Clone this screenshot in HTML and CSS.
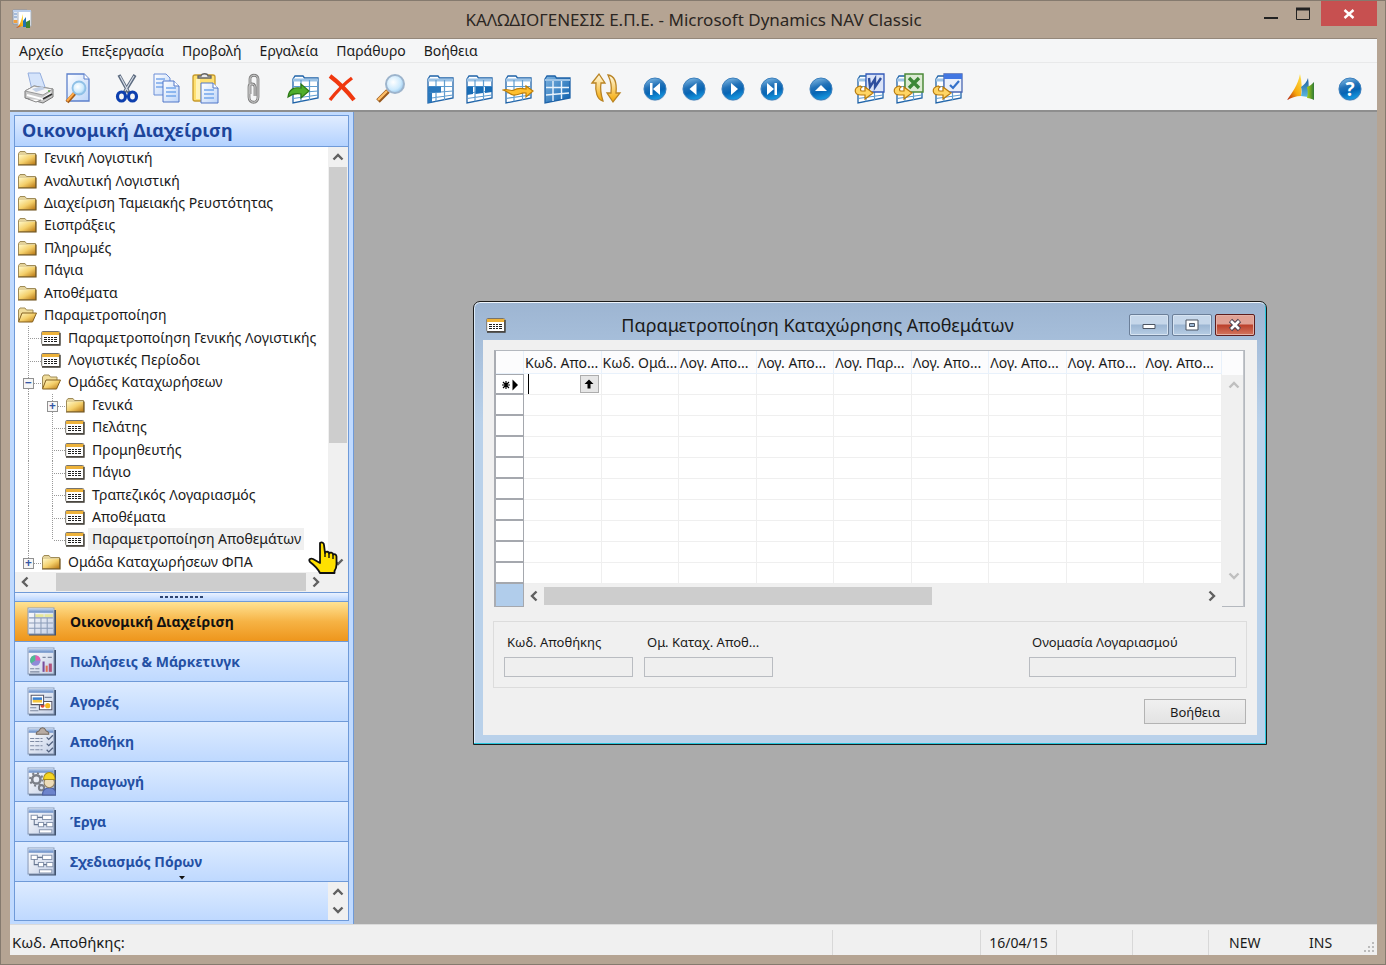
FILE: index.html
```html
<!DOCTYPE html>
<html lang="el">
<head>
  <meta charset="UTF-8">
  <title>ΚΑΛΩΔΙΟΓΕΝΕΣΙΣ Ε.Π.Ε. - Microsoft Dynamics NAV Classic</title>
  <link rel="stylesheet" href="styles.css">
</head>
<body>

  <!-- Shared gradients and symbols -->
  <svg class="defs" width="0" height="0" aria-hidden="true">
    <defs>
      <linearGradient id="gBall" x1="0" y1="0" x2="0.3" y2="1"><stop offset="0" stop-color="#8fc4ea"/><stop offset="0.45" stop-color="#2372b8"/><stop offset="0.7" stop-color="#0765b4"/><stop offset="1" stop-color="#1493dc"/></linearGradient>
      <linearGradient id="gFolder" x1="0" y1="0" x2="1" y2="1"><stop offset="0" stop-color="#fff7c4"/><stop offset="0.5" stop-color="#f4cf6a"/><stop offset="1" stop-color="#b87612"/></linearGradient>
      <linearGradient id="gPage" x1="0" y1="0" x2="1" y2="1"><stop offset="0" stop-color="#ffffff"/><stop offset="1" stop-color="#bcd4f8"/></linearGradient>
      <linearGradient id="gGold" x1="0" y1="0" x2="0" y2="1"><stop offset="0" stop-color="#fffbe6"/><stop offset="1" stop-color="#f5a800"/></linearGradient>
      <linearGradient id="gGrid" x1="0" y1="0" x2="1" y2="1"><stop offset="0" stop-color="#7fb4e0"/><stop offset="1" stop-color="#0a5fae"/></linearGradient>
      <linearGradient id="gBar" x1="0" y1="0" x2="0" y2="1"><stop offset="0" stop-color="#c4d6f0"/><stop offset="1" stop-color="#5f86c2"/></linearGradient>
      <linearGradient id="gSheet" x1="0" y1="0" x2="1" y2="1"><stop offset="0" stop-color="#ffffff"/><stop offset="1" stop-color="#c3cfe6"/></linearGradient>
      <linearGradient id="gFlame" x1="1" y1="0" x2="0" y2="1"><stop offset="0" stop-color="#ffe44d"/><stop offset="0.55" stop-color="#f7a80d"/><stop offset="1" stop-color="#b01c10"/></linearGradient>
      <linearGradient id="gSpire" x1="0" y1="0" x2="0" y2="1"><stop offset="0" stop-color="#1c5c9c"/><stop offset="1" stop-color="#5cb8e0"/></linearGradient>
      <linearGradient id="gLeaf" x1="0" y1="0" x2="1" y2="0"><stop offset="0" stop-color="#a8cc14"/><stop offset="1" stop-color="#2e7a38"/></linearGradient>
      <radialGradient id="gLens" cx="0.4" cy="0.4" r="0.7"><stop offset="0" stop-color="#ffffff"/><stop offset="0.6" stop-color="#cdeafd"/><stop offset="1" stop-color="#86bce8"/></radialGradient>

      <symbol id="folder" viewBox="0 0 20 16">
        <path d="M1.5 14.5V3.5L3 1.5h5l1.500 2h9v11z" fill="#e3d29a" stroke="#a08c58"/>
        <path d="M2 5h16.500v9.500H2z" fill="url(#gFolder)"/>
        <path d="M1 15h18V4.500" fill="none" stroke="#6b4d15" stroke-width="1.200"/>
      </symbol>
      <symbol id="folder-open" viewBox="0 0 20 16">
        <path d="M1.500 14V3L3 1h5l1.500 2H16v3" fill="#f0dc9a" stroke="#a08c58"/>
        <path d="M5 6h14.500l-4 9H1.500z" fill="url(#gFolder)" stroke="#84601f"/>
      </symbol>
      <symbol id="form" viewBox="0 0 20 16">
        <rect x="0.700" y="1.500" width="18" height="13" rx="1" fill="#fff" stroke="#77736c"/>
        <path d="M1 2h17.500v3H1z" fill="#edb23a"/>
        <path d="M3 7.500h3M7 7.500h2M10 7.500h2M13 7.500h3M3 9.500h3M7 9.500h2M10 9.500h2M13 9.500h3M3 11.500h3M7 11.500h2M10 11.500h2M13 11.500h3" stroke="#1e1e1e" stroke-width="1.100"/>
        <path d="M1 15h18V3" fill="none" stroke="#3d3932" stroke-width="1.300"/>
      </symbol>
      <symbol id="grid" viewBox="0 0 32 32">
        <path d="M4 7l2-3h8l1.500 2H29v20L4 31z" fill="#fff" stroke="#1f63a8" stroke-width="1.300"/>
        <path d="M4 8h25" stroke="#9cc3e6" stroke-width="3"/>
        <path d="M4 14.500h25M4 21l25-2M12 8v21.500M20.500 8v20M4 26.500l25-3.500" fill="none" stroke="#5f9dd0" stroke-width="1.200"/>
      </symbol>
      <symbol id="ball" viewBox="0 0 32 32">
        <circle cx="16" cy="17.500" r="11.500" fill="#cfdbe8"/>
        <circle cx="16" cy="17" r="11" fill="url(#gBall)" stroke="#3c80bd"/>
      </symbol>
      <symbol id="goldarrow" viewBox="0 0 32 32">
        <path d="M6 14c-7 2-6 9 1 9h4v4l8-6-8-6v4H8c-2 0-2-3 0-4z" fill="#ffd563" stroke="#b87a0b" stroke-width="1.200"/>
      </symbol>
      <symbol id="sheet" viewBox="0 0 28 28">
        <path d="M2 26.500h25V3" fill="none" stroke="#42536f" stroke-width="2"/>
        <path d="M1 1h25v25H1z" fill="url(#gSheet)" stroke="#8a9bb8"/>
        <path d="M1.500 1.500h24v4h-24z" fill="url(#gBar)"/>
      </symbol>
      <symbol id="flow" viewBox="0 0 28 28">
        <path d="M4 8h6v4H4zM15 8h9v4h-9zM11 15h5v4h-5zM19 15h6v4h-6zM12 22h12v3H12z" fill="#fff" stroke="#8795ae"/>
        <path d="M10 10h5M7 12v5h4M16 17h3" fill="none" stroke="#66758f"/>
      </symbol>
      <symbol id="up" viewBox="0 0 12 12"><path d="M1.500 8.500L6 4l4.500 4.500" fill="none" stroke="currentColor" stroke-width="2.400"/></symbol>
      <symbol id="down" viewBox="0 0 12 12"><path d="M1.500 3.500L6 8l4.500-4.500" fill="none" stroke="currentColor" stroke-width="2.400"/></symbol>
      <symbol id="left" viewBox="0 0 12 12"><path d="M8.500 1.500L4 6l4.500 4.500" fill="none" stroke="currentColor" stroke-width="2.400"/></symbol>
      <symbol id="right" viewBox="0 0 12 12"><path d="M3.500 1.500L8 6l-4.500 4.500" fill="none" stroke="currentColor" stroke-width="2.400"/></symbol>
    </defs>
  </svg>

  <div class="app">
    <header class="titlebar">
      <svg class="app-icon" viewBox="0 0 20 20">
        <path d="M1 1h14v14H1z" fill="#dfe7f2" stroke="#8b97a8"/><path d="M6 2h13v15H6z" fill="#fff" stroke="#a8b2c0"/><path d="M1 1h18v2H1z" fill="#b9cdea"/><path d="M2 5h3M2 8h3" stroke="#6a8fc4"/><path d="M1.500 11h4v3h-4z" fill="#f0a040"/>
        <path d="M4 19c4-2 5-7 7-14v12z" fill="url(#gFlame)"/><path d="M11 18V12l3-4v10z" fill="#2072b5"/><path d="M14 19v-6l4-2v8z" fill="#40852f"/>
      </svg>
      <h1 class="title">ΚΑΛΩΔΙΟΓΕΝΕΣΙΣ Ε.Π.Ε. - Microsoft Dynamics NAV Classic</h1>
      <div class="win-controls">
        <button class="win-btn" aria-label="Ελαχιστοποίηση"><svg width="16" height="16"><path d="M1 12h14" stroke="#222" stroke-width="2"/></svg></button>
        <button class="win-btn" aria-label="Μεγιστοποίηση"><svg width="16" height="16"><path d="M1.500 3h13v10.500h-13z" fill="none" stroke="#222"/><path d="M1 3h14" stroke="#222" stroke-width="3"/></svg></button>
        <button class="win-btn win-close" aria-label="Κλείσιμο"><svg width="12" height="12"><path d="M1.500 2l9 8M10.500 2l-9 8" stroke="#fff" stroke-width="2.400"/></svg></button>
      </div>
    </header>

    <div class="client">
      <nav class="menubar">
        <button>Αρχείο</button>
        <button>Επεξεργασία</button>
        <button>Προβολή</button>
        <button>Εργαλεία</button>
        <button>Παράθυρο</button>
        <button>Βοήθεια</button>
      </nav>

      <div class="toolbar">
        <div class="tool-group">
          <button class="tool" aria-label="Εκτύπωση"><svg viewBox="0 0 32 32">
            <path d="M5 1h12l5 14-13 3z" fill="#d5e4fb" stroke="#94aede"/>
            <path d="M2 19l9-5 19 3v8l-10 6L2 26z" fill="#c9c9c9" stroke="#777"/>
            <path d="M2 19l9-5 19 3-10 6z" fill="#f6f6f6" stroke="#999"/>
            <path d="M9 17l10-3 3 3-9 3z" fill="#c2d0e6"/>
            <path d="M4 23l15 4 9-6" fill="none" stroke="#fff" stroke-width="2"/>
            <path d="M20 27l9-5" stroke="#333" stroke-width="2"/><path d="M5 27l8 3 5-2" fill="#fff" stroke="#888"/><circle cx="26" cy="19" r="1" fill="#58a548"/>
          </svg></button>
          <button class="tool" aria-label="Προεπισκόπηση"><svg viewBox="0 0 32 32">
            <path d="M5 2h17l5 5v22H5z" fill="url(#gPage)" stroke="#5c80cb" stroke-width="1.300"/><path d="M22 2v5h5" fill="#fff" stroke="#5c80cb"/>
            <path d="M13 21l-8 9" stroke="#a55c17" stroke-width="4"/><path d="M12 21l-7 8" stroke="#ffab4a" stroke-width="2"/>
            <circle cx="17" cy="16" r="6.500" fill="url(#gLens)" stroke="#8fc0e6" stroke-width="1.800"/>
          </svg></button>
        </div>
        <div class="tool-group">
          <button class="tool" aria-label="Αποκοπή"><svg viewBox="0 0 32 32">
            <path d="M8 3l10 18M24 3L13 21" stroke="#5c6b80" stroke-width="3.400"/><path d="M9 4l8 15M23 4l-9 15" stroke="#d6dce6" stroke-width="1.200"/>
            <ellipse cx="10.500" cy="24.500" rx="4" ry="4.500" fill="none" stroke="#0d3fae" stroke-width="3.200"/><ellipse cx="21.500" cy="24.500" rx="4" ry="4.500" fill="none" stroke="#0d3fae" stroke-width="3.200"/>
          </svg></button>
          <button class="tool" aria-label="Αντιγραφή"><svg viewBox="0 0 32 32">
            <path d="M4 2h12l4 4v17H4z" fill="url(#gPage)" stroke="#6b8ed6"/><path d="M6 7h9M6 11h8M6 15h8" stroke="#7aa8ea" stroke-width="1.500"/>
            <path d="M13 9h11l5 5v16H13z" fill="url(#gPage)" stroke="#5177c8"/><path d="M24 9v5h5" fill="#fff" stroke="#5177c8"/><path d="M16 16h10M16 20h10M16 24h10" stroke="#73a6ec" stroke-width="1.600"/>
          </svg></button>
          <button class="tool" aria-label="Επικόλληση"><svg viewBox="0 0 32 32">
            <rect x="4" y="3" width="22" height="26" rx="2" fill="#ffe070" stroke="#c79a2c" stroke-width="1.300"/><path d="M7 7h4v20H7z" fill="#fff3b8"/>
            <path d="M9 6V4h3c0-3 7-3 7 0h3v2z" fill="#e9e9e9" stroke="#666" stroke-width="1.300"/>
            <path d="M12 11h12l5 5v15H12z" fill="url(#gPage)" stroke="#5177c8"/><path d="M24 11v5h5" fill="#fff" stroke="#5177c8"/><path d="M15 18h10M15 22h10M15 26h10" stroke="#73a6ec" stroke-width="1.600"/>
          </svg></button>
        </div>
        <div class="tool-group">
          <button class="tool" aria-label="Συνημμένα"><svg viewBox="0 0 32 32">
            <path d="M12 22V7c0-5 8-5 8 0v18c0 7-9 7-9 0V15c0-4 6-4 6 0v9" fill="none" stroke="#808080" stroke-width="2.800"/><path d="M12 22V7c0-5 8-5 8 0v18c0 7-9 7-9 0V15c0-4 6-4 6 0v9" fill="none" stroke="#d0d0d0" stroke-width="1"/>
          </svg></button>
        </div>
        <div class="tool-group">
          <button class="tool" aria-label="Εισαγωγή"><svg viewBox="0 0 32 32"><use href="#grid" x="2"/><path d="M1 25c1-8 6-10 13-9v-4l8 7-8 7v-4c-5-1-9 0-13 3z" fill="#4fae2b" stroke="#2b7715" stroke-width="1.200"/></svg></button>
          <button class="tool" aria-label="Διαγραφή"><svg viewBox="0 0 32 32"><path d="M4 4c8 6 17 15 24 24" fill="none" stroke="#f0380f" stroke-width="4.200"/><path d="M26 6C18 12 11 19 4 28" fill="none" stroke="#f0380f" stroke-width="3.400"/></svg></button>
        </div>
        <div class="tool-group">
          <button class="tool" aria-label="Εύρεση"><svg viewBox="0 0 32 32">
            <path d="M13 19L3 29" stroke="#98581d" stroke-width="5"/><path d="M12 19L3 28" stroke="#ffbe66" stroke-width="2.400"/>
            <circle cx="20" cy="12" r="9" fill="url(#gLens)" stroke="#9db4cc" stroke-width="2"/>
          </svg></button>
        </div>
        <div class="tool-group">
          <button class="tool" aria-label="Φίλτρο πεδίου"><svg viewBox="0 0 32 32"><use href="#grid"/><path d="M4 14.500h8v6L4 21zM4 21h4v9l-4 1zM12 14.500h5v6h-5z" fill="#2a78bd"/></svg></button>
          <button class="tool" aria-label="Φίλτρο πίνακα"><svg viewBox="0 0 32 32"><use href="#grid"/><path d="M4 14.500h6v7.500L4 23zM12.500 14.500h7.500v6.500l-7.500 1zM22 14.500h7V20l-7 1z" fill="#186cb5"/></svg></button>
          <button class="tool" aria-label="Φίλτρο ροής"><svg viewBox="0 0 32 32"><use href="#grid"/><path d="M1 18c5-2 7 2 11 0 3-2 7-2 12-1v-3l7 5-7 6v-4c-5-1-8 3-13 2-3-1-6-4-10-5z" fill="#ffbf2e" stroke="#bd7d06" stroke-width="1.200"/></svg></button>
          <button class="tool" aria-label="Εμφάνιση όλων"><svg viewBox="0 0 32 32"><path d="M4 7l2-3h8l1.500 2H29v20L4 31z" fill="url(#gGrid)" stroke="#1f63a8" stroke-width="1.300"/><path d="M4 8h25" stroke="#9cc3e6" stroke-width="2"/><path d="M5 15.500h23M5 23l23-2M12 9v20M20.500 9v18" fill="none" stroke="#e9f3fc" stroke-width="1.400"/></svg></button>
        </div>
        <div class="tool-group">
          <button class="tool" aria-label="Ταξινόμηση"><svg viewBox="0 0 32 32"><path d="M2 11l7-9 6 9h-4c-1 6 0 12 2 18-6-1-8-10-7-18z" fill="url(#gGold)" stroke="#b98425" stroke-width="1.300"/><path d="M18 3c7 1 9 8 8 18h4l-7 9-6-9h4c1-7 0-12-3-18z" fill="url(#gGold)" stroke="#b98425" stroke-width="1.300"/></svg></button>
        </div>
        <div class="tool-group">
          <button class="tool" aria-label="Πρώτο"><svg viewBox="0 0 32 32"><use href="#ball"/><path d="M11 11h2.500v12H11zM21 11v12l-7-6z" fill="#fff"/></svg></button>
          <button class="tool" aria-label="Προηγούμενο"><svg viewBox="0 0 32 32"><use href="#ball"/><path d="M18.500 11v12l-7-6z" fill="#fff"/></svg></button>
          <button class="tool" aria-label="Επόμενο"><svg viewBox="0 0 32 32"><use href="#ball"/><path d="M14 11v12l7-6z" fill="#fff"/></svg></button>
          <button class="tool" aria-label="Τελευταίο"><svg viewBox="0 0 32 32"><use href="#ball"/><path d="M11 11v12l7-6zM18.500 11H21v12h-2.500z" fill="#fff"/></svg></button>
        </div>
        <div class="tool-group">
          <button class="tool" aria-label="Λίστα"><svg viewBox="0 0 32 32"><use href="#ball"/><path d="M10 19h12l-6-6z" fill="#fff"/></svg></button>
        </div>
        <div class="tool-group">
          <button class="tool" aria-label="Word"><svg viewBox="0 0 32 32"><use href="#grid"/><path d="M12 2h18v18H12z" fill="#dbe4f8" stroke="#3359b8" stroke-width="1.300"/><path d="M15 6l1 9 5-8v8l6-9" fill="none" stroke="#2e4f9e" stroke-width="2.400"/><use href="#goldarrow"/></svg></button>
          <button class="tool" aria-label="Excel"><svg viewBox="0 0 32 32"><use href="#grid"/><path d="M12 2h18v18H12z" fill="#dcebd3" stroke="#4c8a3a" stroke-width="1.500"/><path d="M16 6l10 10M26 6L16 16" fill="none" stroke="#3c8736" stroke-width="3.400"/><use href="#goldarrow"/></svg></button>
          <button class="tool" aria-label="SharePoint"><svg viewBox="0 0 32 32"><use href="#grid"/><path d="M12 2h18v18H12z" fill="#eaf0fb" stroke="#4a67b2" stroke-width="1.300"/><path d="M12 2h18v5H12z" fill="#4277e2"/><path d="M18 13l3 3 6-7" fill="none" stroke="#3371cb" stroke-width="2.200"/><use href="#goldarrow"/></svg></button>
        </div>
        <div class="tool-group tool-right">
          <button class="tool" aria-label="Dynamics"><svg viewBox="0 0 32 32"><path d="M2 28C7 21 13 13 15 2c2 8 2 15 1 22-5 0-10 2-14 4z" fill="url(#gFlame)"/><path d="M16 24c1-4 1-6 0-9 3-2 6-5 7-9 1 6 1 13 0 19z" fill="url(#gSpire)"/><path d="M22 26c1-4 1-7 0-11 3-1 5-3 7-5v18c-2-1-4-2-7-2z" fill="url(#gLeaf)"/></svg></button>
          <button class="tool" aria-label="Βοήθεια"><svg viewBox="0 0 32 32"><use href="#ball"/><text class="qmark" x="16" y="24">?</text></svg></button>
        </div>
      </div>

      <div class="workspace">
        <aside class="sidebar">
          <div class="pane">
            <h2 class="pane-title">Οικονομική Διαχείριση</h2>
            <div class="tree-area">
              <ul class="tree">
                <li><svg class="ico"><use href="#folder"/></svg><span>Γενική Λογιστική</span></li>
                <li><svg class="ico"><use href="#folder"/></svg><span>Αναλυτική Λογιστική</span></li>
                <li><svg class="ico"><use href="#folder"/></svg><span>Διαχείριση Ταμειακής Ρευστότητας</span></li>
                <li><svg class="ico"><use href="#folder"/></svg><span>Εισπράξεις</span></li>
                <li><svg class="ico"><use href="#folder"/></svg><span>Πληρωμές</span></li>
                <li><svg class="ico"><use href="#folder"/></svg><span>Πάγια</span></li>
                <li><svg class="ico"><use href="#folder"/></svg><span>Αποθέματα</span></li>
                <li><svg class="ico"><use href="#folder-open"/></svg><span>Παραμετροποίηση</span></li>
                <li><i class="guide tee"></i><svg class="ico"><use href="#form"/></svg><span>Παραμετροποίηση Γενικής Λογιστικής</span></li>
                <li><i class="guide tee"></i><svg class="ico"><use href="#form"/></svg><span>Λογιστικές Περίοδοι</span></li>
                <li><i class="guide tee"><b class="box">−</b></i><svg class="ico"><use href="#folder-open"/></svg><span>Ομάδες Καταχωρήσεων</span></li>
                <li><i class="guide"></i><i class="guide tee"><b class="box">+</b></i><svg class="ico"><use href="#folder"/></svg><span>Γενικά</span></li>
                <li><i class="guide"></i><i class="guide tee"></i><svg class="ico"><use href="#form"/></svg><span>Πελάτης</span></li>
                <li><i class="guide"></i><i class="guide tee"></i><svg class="ico"><use href="#form"/></svg><span>Προμηθευτής</span></li>
                <li><i class="guide"></i><i class="guide tee"></i><svg class="ico"><use href="#form"/></svg><span>Πάγιο</span></li>
                <li><i class="guide"></i><i class="guide tee"></i><svg class="ico"><use href="#form"/></svg><span>Τραπεζικός Λογαριασμός</span></li>
                <li><i class="guide"></i><i class="guide tee"></i><svg class="ico"><use href="#form"/></svg><span>Αποθέματα</span></li>
                <li><i class="guide"></i><i class="guide tee last"></i><svg class="ico"><use href="#form"/></svg><span class="selected">Παραμετροποίηση Αποθεμάτων</span></li>
                <li><i class="guide tee last"><b class="box">+</b></i><svg class="ico"><use href="#folder"/></svg><span>Ομάδα Καταχωρήσεων ΦΠΑ</span></li>
              </ul>
              <div class="vscroll">
                <svg class="chev"><use href="#up"/></svg>
                <div class="thumb tree-thumb"></div>
                <svg class="chev chev-end"><use href="#down"/></svg>
              </div>
              <svg class="hand" viewBox="0 0 30 34">
                <path d="M12 2c2-1.500 4 0 4 2l1 8c1-2 4-1.500 4 .5 1-1.500 4-1 4 1 1-1 3.500 0 3.500 2v8c0 3-1 5-2 6.500V32H12c-2-4-6-8-10-11-2-3 1-4 3-3l7 4z" fill="#ffe000" stroke="#111" stroke-width="1.800" stroke-linejoin="round"/>
                <path d="M17 12v4M21 13v4M25 14v4" stroke="#111" stroke-width="1.400"/>
              </svg>
            </div>
            <div class="hscroll">
              <svg class="chev"><use href="#left"/></svg>
              <div class="thumb side-thumb"></div>
              <svg class="chev"><use href="#right"/></svg>
            </div>
            <div class="splitter"></div>

            <div class="nav-buttons">
              <button class="nav active"><svg viewBox="0 0 28 28"><use href="#sheet"/><path d="M8 7h8v3H8zM17 7h8v3h-8z" fill="#e6e79a"/><path d="M2 10.500h23M2 15.500h23M2 20.500h23M7.500 6v20M13.500 10v16M19.500 10v16" stroke="#8b9cb8"/></svg>Οικονομική Διαχείριση</button>
              <button class="nav"><svg viewBox="0 0 28 28"><use href="#sheet"/><circle cx="8" cy="13" r="5" fill="#8f8bd8"/><path d="M8 13V8a5 5 0 0 1 5 5z" fill="#e45fb0"/><path d="M8 13l-4 3a5 5 0 0 1 4-8z" fill="#4fbb91"/><path d="M15 10h3M20 10h4M3 21h4M8 21h4M3 24h9" stroke="#7c88a0"/><path d="M15 14h2v10h-2z" fill="#7a4d9c"/><path d="M18 18h2v6h-2z" fill="#e07050"/><path d="M21 16h3v8h-3z" fill="#b0527e"/></svg>Πωλήσεις &amp; Μάρκετινγκ</button>
              <button class="nav"><svg viewBox="0 0 28 28"><use href="#sheet"/><path d="M17 10h7M3 20h6M3 23h8" stroke="#7c88a0"/><path d="M12 14h12v8H12z" fill="#fff" stroke="#556"/><circle cx="15" cy="18" r="2" fill="#e2452f"/><circle cx="20" cy="18" r="2.500" fill="#f3b71f"/><path d="M4 8h12v9H4z" fill="#fff" stroke="#556"/><path d="M5.500 10h9v2.500h-9z" fill="#3a7fd0"/><path d="M5.500 12.500h9V15h-9z" fill="#f4c53a"/></svg>Αγορές</button>
              <button class="nav"><svg viewBox="0 0 28 28"><use href="#sheet"/><path d="M9 6c1-3 3-1 3-3 1-3 5-3 6 0 0 2 2 0 3 3v1H9z" fill="#b8aca4" stroke="#74695f"/><path d="M3 11h12M3 14h12M3 18h12M3 22h12" stroke="#7f8ba3" stroke-dasharray="4 1"/><path d="M19 10l2 2 4-4M19 16l2 2 4-4M19 22l2 2 4-4" fill="none" stroke="#51617e" stroke-width="1.200"/></svg>Αποθήκη</button>
              <button class="nav"><svg viewBox="0 0 28 28"><use href="#sheet"/><circle cx="9" cy="12" r="4" fill="none" stroke="#7b7f88" stroke-width="2.500"/><circle cx="9" cy="12" r="6" fill="none" stroke="#7b7f88" stroke-width="2" stroke-dasharray="2 2.700"/><circle cx="14" cy="20" r="2.500" fill="none" stroke="#7b7f88" stroke-width="2"/><path d="M15 27c0-5 3-7 7-7s6 2 6 7z" fill="#6d84cc" stroke="#4a5e9e"/><circle cx="21.500" cy="15" r="5" fill="#eddcb8" stroke="#8d7d60"/><path d="M16 12c0-9 11-9 11 0z" fill="#f5d522" stroke="#a98c14"/></svg>Παραγωγή</button>
              <button class="nav"><svg viewBox="0 0 28 28"><use href="#sheet"/><use href="#flow"/></svg>Έργα</button>
              <button class="nav"><svg viewBox="0 0 28 28"><use href="#sheet"/><use href="#flow"/></svg>Σχεδιασμός Πόρων</button>
            </div>
            <div class="nav-overflow">
              <svg class="more" viewBox="0 0 6 4"><path d="M0 0h6L3 3.500z" fill="#111"/></svg>
              <div class="vscroll">
                <svg class="chev"><use href="#up"/></svg>
                <svg class="chev chev-end"><use href="#down"/></svg>
              </div>
            </div>
          </div>
        </aside>

        <main class="desktop">
          <section class="child">
            <header class="child-title">
              <svg class="ico"><use href="#form"/></svg>
              <h2>Παραμετροποίηση Καταχώρησης Αποθεμάτων</h2>
              <div class="child-controls">
                <button aria-label="Ελαχιστοποίηση"><svg width="16" height="14"><path d="M2 6.500h12v4H2z" fill="#fff" stroke="#4c5563"/></svg></button>
                <button aria-label="Επαναφορά"><svg width="16" height="14"><path d="M2 2h12v10H2z" fill="#fff" stroke="#4c5563"/><path d="M5.500 5.500h5v3h-5z" fill="#9db8d5" stroke="#4c5563"/></svg></button>
                <button class="child-close" aria-label="Κλείσιμο"><svg width="16" height="14"><path d="M3.500 2.500l9 9M12.500 2.500l-9 9" stroke="#4b4050" stroke-width="4.600"/><path d="M4 3l8 8M12 3l-8 8" stroke="#fff" stroke-width="2.600"/></svg></button>
              </div>
            </header>

            <div class="child-body">
              <div class="grid-box">
                <div class="grid-main">
                  <table class="records">
                    <thead>
                      <tr><th class="sel"></th><th>Κωδ. Απο...</th><th>Κωδ. Ομά...</th><th>Λογ. Απο...</th><th>Λογ. Απο...</th><th>Λογ. Παρ...</th><th>Λογ. Απο...</th><th>Λογ. Απο...</th><th>Λογ. Απο...</th><th>Λογ. Απο...</th></tr>
                    </thead>
                    <tbody>
                      <tr>
                        <td class="sel"><svg class="marker" viewBox="0 0 18 12"><path d="M5 2v8M1 6h8M2 3l6 6M8 3L2 9" stroke="#000" stroke-width="1.200"/><path d="M11.500 0.500v11l5.500-5.500z"/></svg></td>
                        <td><div class="edit-cell"><input type="text" aria-label="Κωδ. Αποθήκης"><button class="lookup" aria-label="Αναζήτηση"><svg viewBox="0 0 10 10"><path d="M5 0.500l4.500 4.500h-3v4.500h-3V5h-3z"/></svg></button></div></td>
                        <td></td><td></td><td></td><td></td><td></td><td></td><td></td><td></td>
                      </tr>
                      <tr><td class="sel"></td><td></td><td></td><td></td><td></td><td></td><td></td><td></td><td></td><td></td></tr>
                      <tr><td class="sel"></td><td></td><td></td><td></td><td></td><td></td><td></td><td></td><td></td><td></td></tr>
                      <tr><td class="sel"></td><td></td><td></td><td></td><td></td><td></td><td></td><td></td><td></td><td></td></tr>
                      <tr><td class="sel"></td><td></td><td></td><td></td><td></td><td></td><td></td><td></td><td></td><td></td></tr>
                      <tr><td class="sel"></td><td></td><td></td><td></td><td></td><td></td><td></td><td></td><td></td><td></td></tr>
                      <tr><td class="sel"></td><td></td><td></td><td></td><td></td><td></td><td></td><td></td><td></td><td></td></tr>
                      <tr><td class="sel"></td><td></td><td></td><td></td><td></td><td></td><td></td><td></td><td></td><td></td></tr>
                      <tr><td class="sel"></td><td></td><td></td><td></td><td></td><td></td><td></td><td></td><td></td><td></td></tr>
                      <tr><td class="sel"></td><td></td><td></td><td></td><td></td><td></td><td></td><td></td><td></td><td></td></tr>
                    </tbody>
                  </table>
                  <div class="grid-foot">
                    <div class="corner"></div>
                    <div class="hscroll">
                      <svg class="chev"><use href="#left"/></svg>
                      <div class="track"><div class="thumb grid-thumb"></div></div>
                      <svg class="chev"><use href="#right"/></svg>
                    </div>
                  </div>
                </div>
                <div class="grid-side">
                  <svg class="chev"><use href="#up"/></svg>
                  <svg class="chev chev-end"><use href="#down"/></svg>
                </div>
              </div>

              <div class="details">
                <div class="field"><label for="loc">Κωδ. Αποθήκης</label><input id="loc" type="text" readonly></div>
                <div class="field"><label for="grp">Ομ. Καταχ. Αποθ...</label><input id="grp" type="text" readonly></div>
                <div class="field wide"><label for="acc">Ονομασία Λογαριασμού</label><input id="acc" type="text" readonly></div>
              </div>

              <button class="help-btn">Βοήθεια</button>
            </div>
          </section>
        </main>
      </div>

      <footer class="statusbar">
        <div class="status-main">Κωδ. Αποθήκης:</div>
        <div class="cell cell-wide"></div>
        <div class="cell">16/04/15</div>
        <div class="cell"></div>
        <div class="cell"></div>
        <div class="cell cell-modes"><span>NEW</span><span>INS</span>
          <svg class="grip" viewBox="0 0 11 11"><path d="M8 0h2v2H8zM4 4h2v2H4zM8 4h2v2H8zM0 8h2v2H0zM4 8h2v2H4zM8 8h2v2H8z" fill="#bbb"/></svg>
        </div>
      </footer>
    </div>
  </div>

</body>
</html>
```

FILE: styles.css
```css
* {
  box-sizing: border-box;
}

body {
  margin: 0;
  font-family: "Noto Sans", "Open Sans", sans-serif;
  font-size: 14px;
  color: #1a1a1a;
}

button,
input {
  font: inherit;
  color: inherit;
  margin: 0;
  padding: 0;
  border: none;
  background: none;
}

h1, h2, ul {
  margin: 0;
  padding: 0;
}

.defs {
  position: absolute;
}

/* main window */
.app {
  display: flex;
  flex-direction: column;
  height: 100vh;
  background: #b5a493;
  border: 1px solid #857a6e;
  padding: 0 8px 9px 9px;
}

.titlebar {
  display: grid;
  grid-template-columns: 1fr auto 1fr;
  align-items: start;
  height: 37px;
}
.app-icon {
  width: 20px;
  height: 20px;
  margin: 8px 0 0 2px;
}
.title {
  font-size: 17px;
  font-weight: normal;
  line-height: 37px;
  color: #2b2622;
}
.win-controls {
  display: flex;
  justify-content: flex-end;
}
.win-btn {
  display: flex;
  align-items: center;
  justify-content: center;
  width: 32px;
  height: 25px;
}
.win-close {
  width: 56px;
  margin-left: 2px;
  background: #c75050;
}

.client {
  flex: 1;
  display: flex;
  flex-direction: column;
  min-height: 0;
  border-top: 1px solid #94877a;
  background: #f5f6f7;
}

/* menu and toolbar */
.menubar {
  display: flex;
  height: 24px;
  border-bottom: 1px solid #e8e9ea;
}
.menubar button {
  padding: 0 9px;
  line-height: 22px;
}

.toolbar {
  display: flex;
  align-items: center;
  gap: 13px;
  height: 49px;
  padding: 2px 9px 0 11px;
  border-bottom: 2px solid #8e8e8e;
}
.tool-group {
  display: flex;
  gap: 3px;
}
.tool {
  display: flex;
  justify-content: center;
  width: 36px;
}
.tool svg {
  width: 32px;
  height: 32px;
}
.tool-right {
  gap: 13px;
  margin-left: auto;
}
.qmark {
  font-size: 19px;
  font-weight: bold;
  fill: #fff;
  text-anchor: middle;
}

.workspace {
  flex: 1;
  display: flex;
  min-height: 0;
}

/* navigation pane */
.sidebar {
  display: flex;
  width: 344px;
  padding: 3px 4px 3px 4px;
  background: #c0daff;
  border-right: 1px solid #6f9ad8;
}
.pane {
  flex: 1;
  display: flex;
  flex-direction: column;
  min-width: 0;
  border: 1px solid #6f9ad8;
  background: #fff;
}
.pane-title {
  height: 31px;
  padding-left: 7px;
  line-height: 28px;
  font-size: 18px;
  color: #1d459b;
  background: linear-gradient(#e0ecff, #b3d2ff);
  border-bottom: 1px solid #6f9ad8;
}

.tree-area {
  flex: 1;
  position: relative;
  display: flex;
  min-height: 0;
}
.tree {
  flex: 1;
  display: grid;
  grid-auto-rows: 1fr;
  height: 426px;
  padding-left: 2px;
  list-style: none;
  white-space: nowrap;
  min-width: 0;
}
.tree li {
  display: flex;
  align-items: center;
  min-height: 0;
}
.tree li span {
  padding: 0 3px 0 4px;
  margin-left: 3px;
  line-height: 20px;
}
.tree li .selected {
  line-height: 22px;
  background: #f0f0f0;
}
.ico {
  flex: none;
  width: 20px;
  height: 16px;
}
.guide {
  flex: none;
  position: relative;
  width: 24px;
  height: 100%;
  background: repeating-linear-gradient(#999 0 1px, transparent 1px 2px) 11px 0 / 1px 100% no-repeat;
}
.guide.last {
  background-size: 1px 50%;
}
.guide.tee::after {
  content: "";
  position: absolute;
  left: 12px;
  right: 0;
  top: 12px;
  height: 1px;
  background: repeating-linear-gradient(90deg, transparent 0 1px, #999 1px 2px);
}
.box {
  position: absolute;
  z-index: 1;
  left: 6px;
  top: 7px;
  width: 11px;
  height: 11px;
  border: 1px solid #919191;
  background: #f6f6f6;
  color: #3557a5;
  font-size: 12px;
  font-style: normal;
  line-height: 8px;
  text-align: center;
}

.vscroll {
  display: flex;
  flex-direction: column;
  align-items: center;
  width: 20px;
  padding-right: 1px;
  background: #f0f0f0;
}
.hscroll {
  display: flex;
  align-items: center;
  height: 20px;
  background: #f0f0f0;
}
.chev {
  flex: none;
  width: 12px;
  height: 12px;
  margin: 4px;
  color: #606060;
}
.chev-end {
  margin-top: auto;
}
.thumb {
  background: #cdcdcd;
}
.tree-thumb {
  width: 18px;
  height: 65%;
}
.side-thumb {
  flex: 1;
  height: 18px;
  margin-left: 21px;
}
.pane > .hscroll {
  padding-right: 22px;
}
.hand {
  position: absolute;
  right: 10px;
  bottom: -3px;
  width: 30px;
  height: 34px;
}

.splitter {
  display: flex;
  justify-content: center;
  align-items: center;
  height: 10px;
  border-top: 1px solid #6f9ad8;
  border-bottom: 1px solid #6f9ad8;
  background: linear-gradient(#eaf2ff, #b9d5ff);
}
.splitter::before {
  content: "";
  width: 44px;
  height: 2px;
  background: repeating-linear-gradient(90deg, #2c4470 0 3px, transparent 3px 5px);
}

.nav {
  display: flex;
  align-items: center;
  gap: 14px;
  width: 100%;
  height: 40px;
  padding: 0 12px;
  border-bottom: 1px solid #6f9ad8;
  background: linear-gradient(#ddebff, #bfd9ff);
  color: #2450a4;
  font-weight: bold;
}
.nav svg {
  width: 29px;
  height: 29px;
}
.nav.active {
  background: linear-gradient(#ffe394, #f6b345 50%, #ee961c);
  color: #111;
}
.nav-overflow {
  position: relative;
  display: flex;
  justify-content: flex-end;
  height: 38px;
  background: linear-gradient(#ddebff, #bfd9ff);
}
.more {
  position: absolute;
  left: 50%;
  top: -6px;
  width: 6px;
  height: 4px;
  margin-left: -3px;
}

/* desktop with the child form */
.desktop {
  flex: 1;
  position: relative;
  background: #ababab;
}
.child {
  position: absolute;
  left: 119px;
  top: 189px;
  width: 794px;
  padding: 0 9px 9px 9px;
  border: 1px solid #1d1d1d;
  border-radius: 7px 7px 0 0;
  background: linear-gradient(#9db5d2, #b9d1ea 120px);
  box-shadow: inset -1px -1px #27c6dc, inset 0 1px #eef5fc, inset 1px 0 #dcebf9;
}
.child-title {
  display: flex;
  align-items: center;
  height: 38px;
  padding: 8px 2px 0 3px;
}
.child-title h2 {
  flex: 1;
  text-align: center;
  font-size: 18px;
  font-weight: normal;
  line-height: 30px;
}
.child-controls {
  display: flex;
  gap: 3px;
}
.child-controls button {
  display: flex;
  align-items: center;
  justify-content: center;
  width: 40px;
  height: 22px;
  border: 1px solid #6b7f99;
  border-radius: 2px;
  background: linear-gradient(#c6d7ea 45%, #9cb6d3 50%, #b7cde4);
  box-shadow: inset 0 0 0 1px #d7e4f2;
}
.child-controls .child-close {
  border-color: #5e1d1d;
  background: linear-gradient(#e0a195 45%, #bb3f2b 50%, #d2765f);
  box-shadow: inset 0 0 0 1px #e3b0a6;
}

.child-body {
  display: flex;
  flex-direction: column;
  padding: 10px 10px 11px 10px;
  background: #f0f0f0;
}
.grid-box {
  display: flex;
  margin-left: 1px;
  margin-right: 2px;
  border: 1px solid #b4b8be;
  border-left: 2px solid #a9acb2;
  border-bottom: none;
  background: linear-gradient(#fcfcfd 24px, #f0f0f0 24px);
}
.grid-main {
  flex: 1;
  min-width: 0;
}
.records {
  width: 100%;
  table-layout: fixed;
  border-collapse: separate;
  border-spacing: 0;
  background: #fff;
}
.records th {
  height: 23px;
  padding: 2px 0 0 1px;
  font-weight: normal;
  line-height: 20px;
  text-align: left;
  white-space: nowrap;
  background: #fcfcfd;
  border-right: 1px solid #e8f1fb;
  border-bottom: 1px solid #e8f1fb;
}
.records td {
  height: 21px;
  padding: 0;
  border-right: 1px solid #efefef;
  border-bottom: 1px solid #efefef;
}
.records .sel {
  width: 28px;
}
.records td.sel {
  border-right: 1px solid #a5a8ae;
  border-bottom: 2px solid #a5a8ae;
}
.records tbody tr:first-child .sel {
  border-top: 1px solid #a5a8ae;
}
.marker {
  display: block;
  width: 18px;
  height: 12px;
  margin: 2px 0 0 5px;
}
.edit-cell {
  display: flex;
  align-items: center;
  height: 20px;
  padding: 0 2px 0 4px;
}
.edit-cell input {
  flex: 1;
  min-width: 0;
  height: 20px;
  border-left: 1px solid #000;
}
.lookup {
  display: flex;
  align-items: center;
  justify-content: center;
  width: 19px;
  height: 18px;
  border: 1px solid #adadad;
  background: #e6e6e6;
}
.lookup svg {
  width: 10px;
  height: 10px;
}

.grid-foot {
  display: flex;
}
.corner {
  width: 28px;
  height: 23px;
  border-right: 1px solid #a5a8ae;
  border-bottom: 1px solid #a5a8ae;
  background: #b1cdeb;
}
.grid-foot .hscroll {
  flex: 1;
  height: 23px;
}
.track {
  flex: 1;
}
.grid-thumb {
  width: 59%;
  height: 18px;
}
.grid-side {
  display: flex;
  flex-direction: column;
  align-items: center;
  width: 22px;
  padding: 24px 0 20px 3px;
  border-right: 1px solid #c3c6cb;
  border-bottom: 1px solid #b4b8be;
}
.grid-side .chev {
  color: #bfbfbf;
}

.details {
  display: flex;
  gap: 11px;
  margin-top: 14px;
  padding: 10px;
  height: 67px;
  border: 1px solid #dcdcdc;
}
.field {
  width: 129px;
}
.field.wide {
  width: 207px;
  margin-left: auto;
}
.field label {
  display: block;
  padding-left: 3px;
  font-size: 13px;
  line-height: 20px;
  margin-bottom: 5px;
  white-space: nowrap;
}
.field input {
  display: block;
  width: 100%;
  height: 20px;
  border: 1px solid #b9bcc1;
  background: #efefef;
}
.help-btn {
  align-self: flex-end;
  width: 102px;
  height: 25px;
  margin: 11px 1px 0 0;
  border: 1px solid #b3b3b3;
  background: linear-gradient(#f0f0f0, #e3e3e3);
  font-size: 13px;
}

/* status bar */
.statusbar {
  display: flex;
  height: 31px;
  padding-top: 5px;
  border-top: 1px solid #dadada;
  background: #f0f0f0;
  line-height: 25px;
}
.status-main {
  flex: 1;
  padding-left: 2px;
  font-size: 15px;
}
.cell {
  width: 76px;
  border-left: 1px solid #d8d8d8;
  text-align: center;
}
.cell-wide {
  width: 148px;
}
.cell-modes {
  display: flex;
  width: 169px;
  padding-left: 20px;
}
.cell-modes span {
  width: 80px;
  text-align: left;
}
.cell-modes span + span {
  width: auto;
}
.grip {
  width: 11px;
  height: 11px;
  margin: auto 2px 2px auto;
}
```
